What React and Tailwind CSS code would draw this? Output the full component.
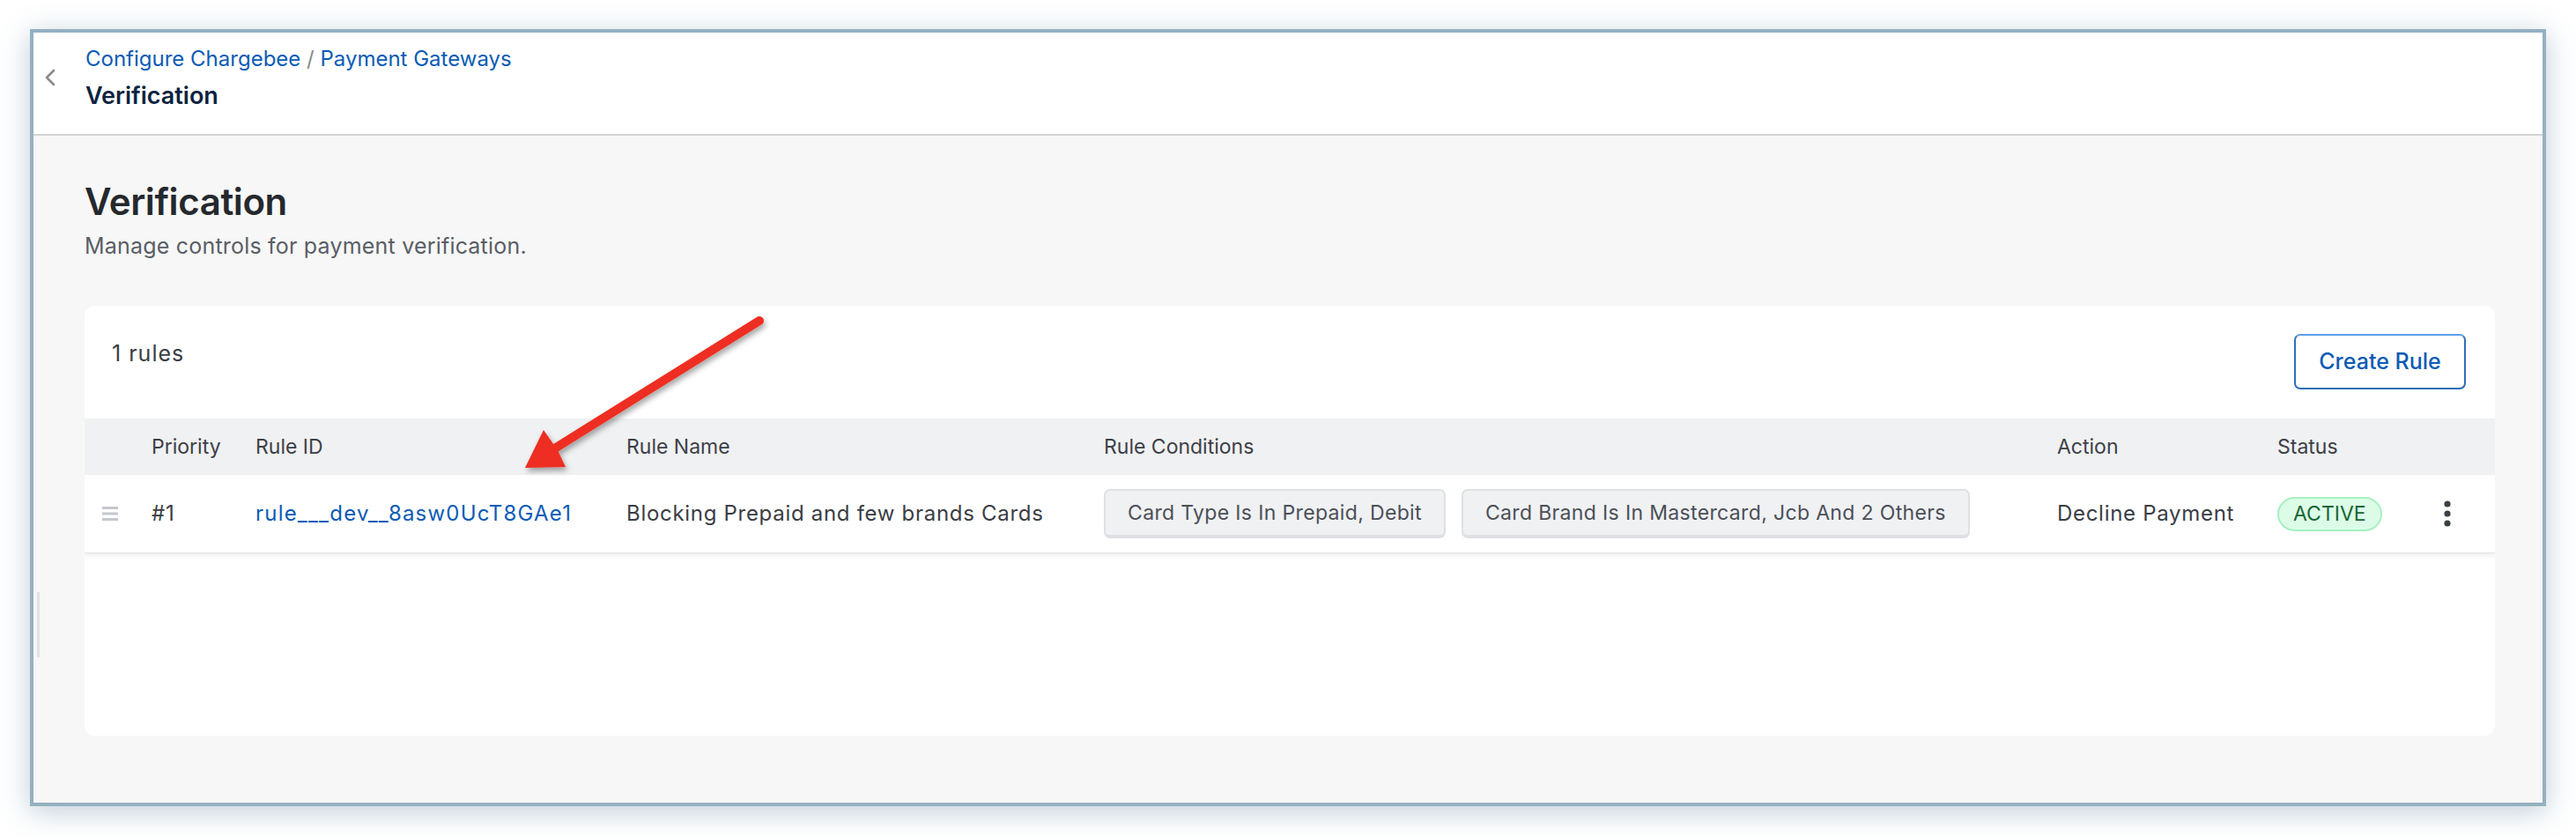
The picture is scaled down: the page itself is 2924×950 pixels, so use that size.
import React from 'react';

// column template shared by header band and rows
const cols = 'grid grid-cols-[76px_118px_421px_542px_1082px_250px_180px_1fr] items-center';

const Chevron = () => (
  <svg width="16" height="20" viewBox="0 0 16 20" fill="none">
    <path d="M12 2 L4 10 L12 18" stroke="#8c8c8c" strokeWidth="2.6" strokeLinecap="round" strokeLinejoin="round" />
  </svg>
);

const DragHandle = () => (
  <svg width="18" height="16" viewBox="0 0 18 16">
    <rect x="0" y="0" width="18" height="3" fill="#c4c7cc" />
    <rect x="0" y="6.5" width="18" height="3" fill="#c4c7cc" />
    <rect x="0" y="13" width="18" height="3" fill="#c4c7cc" />
  </svg>
);

const Kebab = () => (
  <svg width="8" height="30" viewBox="0 0 8 30">
    <circle cx="4" cy="4" r="3.6" fill="#3b3f46" />
    <circle cx="4" cy="15" r="3.6" fill="#3b3f46" />
    <circle cx="4" cy="26" r="3.6" fill="#3b3f46" />
  </svg>
);

const Chip = ({ children }) => (
  <span className="inline-flex items-center h-[56px] px-[25px] rounded-[7px] bg-[#f0f1f3] border-2 border-b-[4px] border-[#dfe0e4] text-[23px] tracking-[0.35px] text-[#4b4f57]">
    {children}
  </span>
);

// red annotation arrow drawn over the page
const Arrow = () => (
  <svg className="absolute left-0 top-0 pointer-events-none" width="2924" height="950" viewBox="0 0 2924 950">
    <defs>
      <filter id="sh" x="-20%" y="-20%" width="140%" height="140%">
        <feDropShadow dx="2" dy="4" stdDeviation="3" floodColor="#000" floodOpacity="0.35" />
      </filter>
    </defs>
    <g filter="url(#sh)">
      <line x1="862" y1="364" x2="628" y2="510" stroke="#ee2f20" strokeWidth="10" strokeLinecap="round" />
      <polygon points="596,531 617,488 633,511 642,530" fill="#ee2f20" />
    </g>
  </svg>
);

const App = () => {
  return (
    <div className="relative w-[2924px] h-[950px] bg-white pl-[34px] pr-[34px] pt-[33px] font-['Inter',sans-serif]">
      <div className="relative flex flex-col h-[882px] border-4 border-[#94b1c1] shadow-[0_6px_30px_rgba(70,110,140,0.35)] bg-[#f7f7f7]">
        {/* Header */}
        <div className="flex items-start h-[117px] bg-white border-b-2 border-[#d4d4d4] pl-[11px] pt-[12px]">
          <div className="mt-[29px] w-[48px]">
            <Chevron />
          </div>
          <div className="flex flex-col gap-[6px]">
            <div className="text-[24px] leading-[36px] text-[#0b5bb5]">
              Configure Chargebee <span className="text-[#8a8a8a]">/</span> Payment Gateways
            </div>
            <div className="text-[27px] leading-[36px] font-semibold text-[#0c2340]">Verification</div>
          </div>
        </div>

        {/* Content */}
        <div className="relative flex-1 pl-[58px] pr-[54px] pt-[48px]">
          <div className="absolute left-[4px] top-[518px] w-[3px] h-[74px] bg-[#e2e2e2]" />
          <h1 className="text-[42px] leading-[53px] font-semibold text-[#25282d] tracking-[-0.4px]">Verification</h1>
          <p className="mt-[6px] text-[25px] tracking-[0.2px] leading-[36px] text-[#5a5e66]">Manage controls for payment verification.</p>

          <div className="mt-[50px] h-[488px] bg-white rounded-[12px] overflow-hidden">
            <div className="flex items-start justify-between pl-[31px] pr-[33px] pt-[32px]">
              <span className="mt-[4px] text-[25px] tracking-[1px] leading-[36px] text-[#3a3d44]">1 rules</span>
              <button className="h-[63px] w-[195px] rounded-[7px] border-2 border-[#2f6fba] border-t-[#5a9fe6] text-[25px] font-medium text-[#0b5bb5]">
                Create Rule
              </button>
            </div>

            {/* Table */}
            <div className={`${cols} mt-[33px] h-[64px] bg-[#f0f1f3] text-[23px] text-[#3d4047]`}>
              <span />
              <span>Priority</span>
              <span>Rule ID</span>
              <span>Rule Name</span>
              <span>Rule Conditions</span>
              <span>Action</span>
              <span>Status</span>
              <span />
            </div>
            <div className={`${cols} h-[89px] border-b border-[#e4e5e8] shadow-[0_3px_5px_rgba(0,0,0,0.07)] text-[24px] tracking-[0.7px] text-[#3a3d44]`}>
              <span className="pl-[20px] flex items-center">
                <DragHandle />
              </span>
              <span>#1</span>
              <span className="text-[#0b5bb5] tracking-[1.2px]">rule___dev__8asw0UcT8GAe1</span>
              <span>Blocking Prepaid and few brands Cards</span>
              <span className="flex items-center gap-[18px] tracking-normal">
                <Chip>Card Type Is In Prepaid, Debit</Chip>
                <Chip>Card Brand Is In Mastercard, Jcb And 2 Others</Chip>
              </span>
              <span>Decline Payment</span>
              <span className="tracking-normal">
                <span className="inline-flex items-center h-[39px] px-[16px] rounded-full bg-[#dcfce7] border-2 border-[#a7f0c1] text-[23px] text-[#166534]">
                  ACTIVE
                </span>
              </span>
              <span className="pl-[9px] flex items-center">
                <Kebab />
              </span>
            </div>
          </div>
        </div>
      </div>
      <Arrow />
    </div>
  );
};

export default App;
